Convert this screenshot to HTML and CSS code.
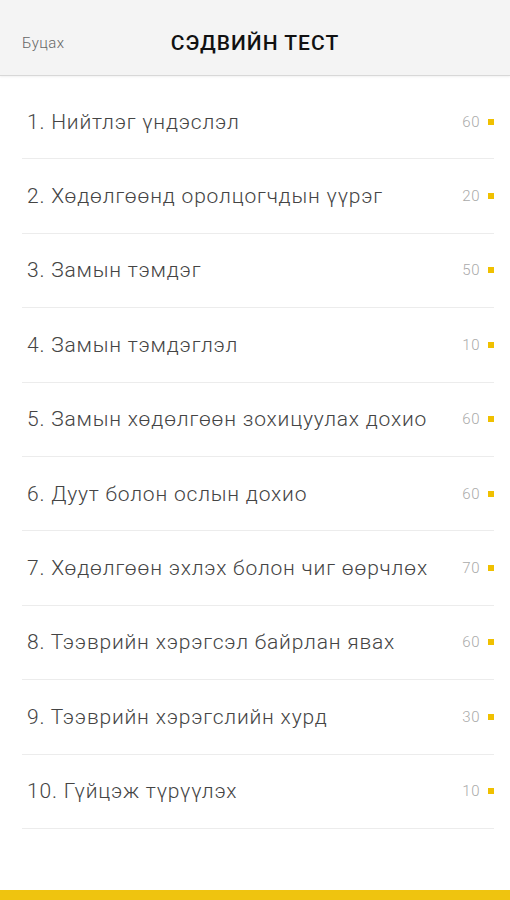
FILE: index.html
```html
<!DOCTYPE html>
<html lang="mn">
<head>
    <meta charset="UTF-8">
    <meta name="viewport" content="width=device-width, initial-scale=1.0">
    <title>Сэдвийн тест</title>
    <link rel="stylesheet" href="styles.css">
</head>
<body>
    <div class="app">
        <header class="topbar">
            <a class="back" href="#">Буцах</a>
            <h1>СЭДВИЙН ТЕСТ</h1>
        </header>

        <!-- Topics list -->
        <ul class="topics">
            <li><span class="name">1. Нийтлэг үндэслэл</span><span class="count">60</span><span class="dot"></span></li>
            <li><span class="name">2. Хөдөлгөөнд оролцогчдын үүрэг</span><span class="count">20</span><span class="dot"></span></li>
            <li><span class="name">3. Замын тэмдэг</span><span class="count">50</span><span class="dot"></span></li>
            <li><span class="name">4. Замын тэмдэглэл</span><span class="count">10</span><span class="dot"></span></li>
            <li><span class="name">5. Замын хөдөлгөөн зохицуулах дохио</span><span class="count">60</span><span class="dot"></span></li>
            <li><span class="name">6. Дуут болон ослын дохио</span><span class="count">60</span><span class="dot"></span></li>
            <li><span class="name">7. Хөдөлгөөн эхлэх болон чиг өөрчлөх</span><span class="count">70</span><span class="dot"></span></li>
            <li><span class="name">8. Тээврийн хэрэгсэл байрлан явах</span><span class="count">60</span><span class="dot"></span></li>
            <li><span class="name">9. Тээврийн хэрэгслийн хурд</span><span class="count">30</span><span class="dot"></span></li>
            <li><span class="name">10. Гүйцэж түрүүлэх</span><span class="count">10</span><span class="dot"></span></li>
        </ul>

        <div class="bottom-bar"></div>
    </div>
</body>
</html>
```

FILE: styles.css
```css
html, body {
    margin: 0;
    padding: 0;
}

body {
    background: #fff;
    font-family: Roboto, 'Noto Sans', sans-serif;
    color: #333;
}

.app {
    height: 900px;
    display: flex;
    flex-direction: column;
}

.topbar {
    position: relative;
    height: 76px;
    box-sizing: border-box;
    background: #f4f4f4;
    border-bottom: 1px solid #d8d8d8;
    box-shadow: 0 1px 2px rgba(0, 0, 0, 0.06);
    display: flex;
    align-items: center;
    justify-content: center;
}

.back {
    position: absolute;
    left: 22px;
    top: 34px;
    font-size: 15px;
    font-weight: 300;
    letter-spacing: 0.4px;
    color: #666;
    text-decoration: none;
}

.topbar h1 {
    margin: 0;
    padding-top: 10px;
    font-size: 21px;
    font-weight: 500;
    letter-spacing: 1px;
    color: #111;
}

.topics {
    list-style: none;
    margin: 0;
    padding: 9px 16px 0 22px;
    flex: 1;
}

.topics li {
    height: 74.4px;
    box-sizing: border-box;
    border-bottom: 1px solid #ececec;
    display: flex;
    align-items: center;
    padding-left: 5px;
}

.name {
    flex: 1;
    font-size: 21px;
    font-weight: 300;
    letter-spacing: 0.8px;
    color: #444;
}

.count {
    font-size: 15px;
    font-weight: 300;
    letter-spacing: 0.5px;
    color: #aaa;
    margin-right: 8px;
}

.dot {
    width: 6px;
    height: 6px;
    background: #f0c000;
}

.bottom-bar {
    height: 10px;
    background: #efc40f;
}
```
